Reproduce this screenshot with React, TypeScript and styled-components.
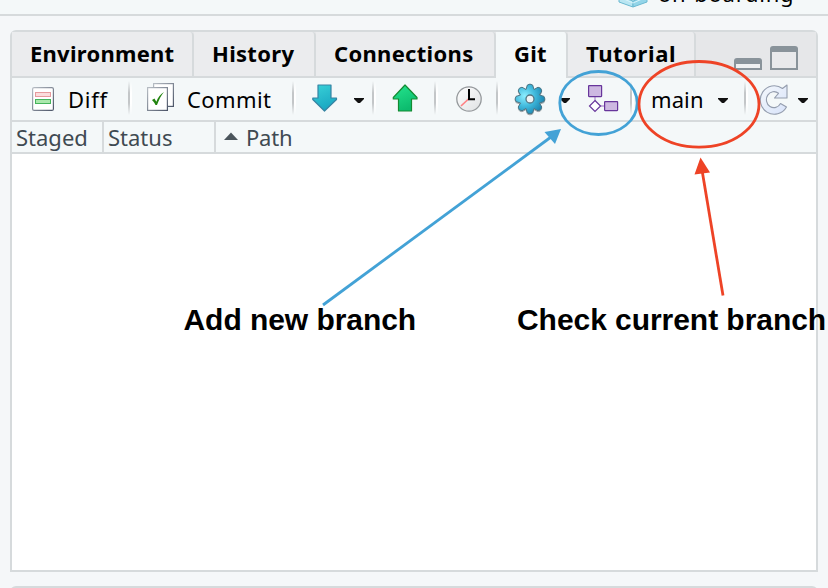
import React from 'react';
import styled, { createGlobalStyle } from 'styled-components';

const line = '#d6dadc';

const GlobalStyle = createGlobalStyle`
  *, *::before, *::after { box-sizing: border-box; }
  body {
    margin: 0;
    background: #f5f7f9;
    font-family: 'Noto Sans', 'Open Sans', sans-serif;
    font-size: 22px;
    color: #000;
    overflow: hidden;
  }
  svg { display: block; flex: none; overflow: visible; }
`;

const Screen = styled.div`
  position: relative;
  width: 828px;
  height: 588px;
  overflow: hidden;
  display: flex;
  flex-direction: column;
`;

const ProjectBar = styled.header`
  height: 16px;
  flex: none;
  display: flex;
  padding-left: 618px;
  background: #f4f8f9;
  border-bottom: 2px solid ${line};
`;

const ProjectName = styled.span`
  margin: -22px 0 0 10px;
  height: 34px;
  line-height: 30px;
  letter-spacing: 0.75px;
  white-space: nowrap;
`;

const Pane = styled.section`
  flex: none;
  display: flex;
  flex-direction: column;
  width: 808px;
  height: 542px;
  margin: 14px 0 0 10px;
  border: 2px solid ${line};
  border-radius: 6px 6px 0 0;
  background: #fff;
`;

const NextPane = styled.section`
  flex: none;
  width: 808px;
  height: 20px;
  margin: 14px 0 0 10px;
  border: 2px solid ${line};
  border-radius: 6px 6px 0 0;
`;

const Tabs = styled.nav`
  display: flex;
  height: 46px;
  flex: none;
  background: #e6e7e9;
  box-shadow: inset 0 -2px ${line};
`;

const Tab = styled.div<{ $width: number; $space: number; $active?: boolean }>`
  width: ${(p) => p.$width}px;
  height: 46px;
  padding-left: 18px;
  border-right: 2px solid ${line};
  border-bottom: ${(p) => (p.$active ? '0' : `2px solid ${line}`)};
  border-top-right-radius: 4px;
  background: ${(p) => (p.$active ? '#f4f8f9' : '#ebecee')};
  font-weight: 700;
  line-height: 43px;
  letter-spacing: ${(p) => p.$space}px;
  white-space: nowrap;
`;

const WindowButtons = styled.div`
  flex: 1;
  display: flex;
  align-items: flex-end;
  justify-content: flex-end;
  gap: 8px;
  padding: 0 18px 8px 0;
`;

const Toolbar = styled.div`
  display: flex;
  align-items: center;
  height: 44px;
  flex: none;
  background: #f4f8f9;
  border-bottom: 2px solid ${line};
`;

const ToolGroup = styled.div<{ $width: number; $pad: number; $gap?: number }>`
  display: flex;
  align-items: center;
  height: 42px;
  width: ${(p) => p.$width}px;
  padding-left: ${(p) => p.$pad}px;
  gap: ${(p) => p.$gap ?? 0}px;
  flex: none;
`;

const CaretSlot = styled.span<{ $after?: number }>`
  padding-top: 3px;
  margin-right: ${(p) => p.$after ?? 0}px;
`;

const Label = styled.span<{ $space: number }>`
  line-height: 42px;
  letter-spacing: ${(p) => p.$space}px;
  white-space: nowrap;
`;

const Separator = styled.i`
  width: 4px;
  height: 34px;
  margin-top: -2px;
  flex: none;
  background:
    linear-gradient(#f4f8f900, #c3c6c8 35%, #c3c6c8 65%, #f4f8f900) 0 0 / 2px 100% no-repeat,
    linear-gradient(#fff0, #fff 35%, #fff 65%, #fff0) 2px 0 / 2px 100% no-repeat;
`;

const Columns = styled.div`
  display: flex;
  height: 32px;
  flex: none;
  background: #f4f8f9;
  border-bottom: 2px solid ${line};
`;

const Column = styled.div<{ $width?: number; $space: number }>`
  display: flex;
  align-items: center;
  gap: 7px;
  ${(p) => (p.$width ? `width: ${p.$width}px; border-right: 2px solid ${line};` : 'flex: 1;')}
  padding-left: ${(p) => (p.$width ? 4 : 7)}px;
  color: #3f4a52;
  line-height: 31px;
  letter-spacing: ${(p) => p.$space}px;
`;

const Annotations = styled.svg`
  position: absolute;
  inset: 0;
`;

const Note = styled.div<{ $x: number; $y: number }>`
  position: absolute;
  left: ${(p) => p.$x}px;
  top: ${(p) => p.$y}px;
  font: 700 30px/36px 'Liberation Sans', Arial, sans-serif;
  letter-spacing: -0.05px;
  white-space: nowrap;
`;

const CubeIcon = () => (
  <svg width="30" height="8" viewBox="0 0 30 8">
    <path d="M1 -4L15 1V7L1 2Z" fill="#b9e6f2" stroke="#6bb9d1" />
    <path d="M29 -4L15 1V7L29 2Z" fill="#93d5e9" stroke="#6bb9d1" />
    <path d="M6 -1L15 3L24 -1" fill="none" stroke="#d8f3fa" />
  </svg>
);

const Caret = ({ after }: { after?: number }) => (
  <CaretSlot $after={after}>
    <svg width="10" height="5" viewBox="0 0 10 5">
      <path d="M0 0H10V1L6 5H4L0 1Z" fill="#111" />
    </svg>
  </CaretSlot>
);

const DiffIcon = () => (
  <svg width="22" height="24" viewBox="0 0 22 24">
    <defs>
      <linearGradient id="sheet" x2="1" y2="1">
        <stop stopColor="#b7bdc4" />
        <stop offset="1" stopColor="#4d5669" />
      </linearGradient>
    </defs>
    <rect x=".6" y=".6" width="20.8" height="22.8" rx="1.5" fill="#fff" stroke="url(#sheet)" strokeWidth="1.2" />
    <rect x="3.5" y="5.5" width="15" height="4" fill="#fbdcdc" stroke="#e69a9d" />
    <rect x="3.5" y="12.5" width="15" height="4" fill="#abe8ad" stroke="#46b45c" />
  </svg>
);

const CommitIcon = () => (
  <svg width="27" height="32" viewBox="0 0 27 32">
    <rect x="6.6" y=".6" width="19.8" height="22.8" fill="#fff" stroke="url(#sheet)" strokeWidth="1.2" />
    <rect x=".6" y="4.6" width="19.8" height="22.8" fill="#fff" stroke="url(#sheet)" strokeWidth="1.2" />
    <path d="M5 17L7.5 15.5L9.3 18.8C11 14.5 13 11.500 17 9C14 12.500 12 16.500 10 22H8.500C7.500 20 6.500 18.500 5 17Z" fill="#22840f" />
  </svg>
);

const PullIcon = () => (
  <svg width="26" height="30" viewBox="0 0 26 30">
    <defs>
      <linearGradient id="pull" x2=".4" y2="1">
        <stop stopColor="#39d2d8" />
        <stop offset="1" stopColor="#1aa7c2" />
      </linearGradient>
    </defs>
    <path d="M6 1H19V14H24.500V15.500L12.500 27L.8 15.500V14H6Z" fill="url(#pull)" stroke="#3684a3" strokeWidth="1.2" strokeLinejoin="round" />
  </svg>
);

const PushIcon = () => (
  <svg width="26" height="30" viewBox="0 0 26 30">
    <defs>
      <linearGradient id="push" x2=".4" y2="1">
        <stop stopColor="#25e58e" />
        <stop offset="1" stopColor="#0cbb6e" />
      </linearGradient>
    </defs>
    <path d="M6.500 27H19.500V15H25V13.500L13 1L1.300 13.500V15H6.500Z" fill="url(#push)" stroke="#148b32" strokeWidth="1.2" strokeLinejoin="round" />
  </svg>
);

const ClockIcon = () => (
  <svg width="26" height="26" viewBox="0 0 26 26">
    <defs>
      <linearGradient id="dial" x2="1" y2="1">
        <stop stopColor="#fff" />
        <stop offset="1" stopColor="#dfe1e3" />
      </linearGradient>
    </defs>
    <circle cx="13" cy="13" r="12.200" fill="url(#dial)" stroke="#969a9d" strokeWidth="1.300" />
    <path d="M12.500 13L5 20" stroke="#ff8184" strokeWidth="1.700" />
    <path d="M13 3V13.200H19" fill="none" stroke="#000" strokeWidth="2" />
  </svg>
);

const GearIcon = () => (
  <svg width="32" height="32" viewBox="-16 -16 32 32">
    <defs>
      <radialGradient id="gear" cx=".32" cy=".4" r=".7">
        <stop stopColor="#8ceeff" />
        <stop offset=".5" stopColor="#40b9dc" />
        <stop offset="1" stopColor="#1982ae" />
      </radialGradient>
      <filter id="gearShadow" x="-20%" y="-20%" width="140%" height="150%">
        <feDropShadow dx="0" dy="1" stdDeviation=".7" floodOpacity=".35" />
      </filter>
    </defs>
    <path
      d="M-4 -9.500L-2.600 -14Q0 -15.800 2.600 -14L4 -9.500L8 -11.800Q11.500 -11.500 11.800 -8L9.500 -4L14 -2.600Q15.800 0 14 2.600L9.500 4L11.800 8Q11.500 11.500 8 11.800L4 9.500L2.600 14Q0 15.800 -2.600 14L-4 9.500L-8 11.800Q-11.500 11.500 -11.800 8L-9.500 4L-14 2.600Q-15.800 0 -14 -2.600L-9.500 -4L-11.800 -8Q-11.500 -11.500 -8 -11.800Z"
      fill="url(#gear)" stroke="#4a7585" strokeWidth="1" filter="url(#gearShadow)"
    />
    <circle r="4" fill="#eef3f5" stroke="#527482" strokeWidth="1.300" />
  </svg>
);

const BranchIcon = () => (
  <svg width="30" height="28" viewBox="0 0 30 28">
    <path d="M7 12V17M12 21H17" stroke="#c7b0dc" strokeWidth="1.800" />
    <rect x=".6" y=".6" width="13" height="11" rx=".5" fill="#cdb8e1" stroke="#67359b" strokeWidth="1.200" />
    <rect x="16.600" y="16.600" width="13" height="9" rx=".5" fill="#cdb8e1" stroke="#67359b" strokeWidth="1.200" />
    <path d="M7 15.500L12.500 21L7 26.500L1.500 21Z" fill="#fff" stroke="#67359b" strokeWidth="1.200" />
  </svg>
);

const RefreshIcon = () => (
  <svg width="28" height="30" viewBox="0 0 28 30">
    <defs>
      <linearGradient id="refresh" x2="1" y2="1">
        <stop stopColor="#f4f8fc" />
        <stop offset="1" stopColor="#d8e3fa" />
      </linearGradient>
    </defs>
    <path
      d="M22.500 4.500L27 1V14H14.500L18.500 9.300A7.500 8 0 1 0 20.500 19.500L26.500 23A14 14.200 0 1 1 22.500 4.500Z"
      fill="url(#refresh)" stroke="#949dae" strokeWidth="1.100" strokeLinejoin="round"
    />
  </svg>
);

const SortIcon = () => (
  <svg width="16" height="11" viewBox="0 0 16 11">
    <path d="M1 8L8 .5L15 8Z" fill="#4b555c" />
  </svg>
);

const MinimizeIcon = () => (
  <svg width="28" height="12" viewBox="0 0 28 12">
    <path d="M0 12V3Q0 0 3 0H25Q28 0 28 3V12Z" fill="#89939a" />
    <path d="M2 6H26V10H2Z" fill="#f0f1f2" />
  </svg>
);

const MaximizeIcon = () => (
  <svg width="28" height="24" viewBox="0 0 28 24">
    <path d="M0 24V3Q0 0 3 0H25Q28 0 28 3V24Z" fill="#89939a" />
    <path d="M2 6H26V22H2Z" fill="#e8e9eb" />
  </svg>
);

export default function App() {
  return (
    <Screen>
      <GlobalStyle />
      <ProjectBar>
        <CubeIcon />
        <ProjectName>on-boarding</ProjectName>
      </ProjectBar>

      <Pane>
        <Tabs>
          <Tab $width={182} $space={0.25}>Environment</Tab>
          <Tab $width={122} $space={0.3}>History</Tab>
          <Tab $width={180} $space={0.3}>Connections</Tab>
          <Tab $width={72} $space={0.3} $active>Git</Tab>
          <Tab $width={128} $space={0.6}>Tutorial</Tab>
          <WindowButtons>
            <MinimizeIcon />
            <MaximizeIcon />
          </WindowButtons>
        </Tabs>

        <Toolbar>
          <ToolGroup $width={116} $pad={20} $gap={14}>
            <DiffIcon />
            <Label $space={0.7}>Diff</Label>
          </ToolGroup>
          <Separator />
          <ToolGroup $width={160} $pad={15} $gap={13}>
            <CommitIcon />
            <Label $space={0.4}>Commit</Label>
          </ToolGroup>
          <Separator />
          <ToolGroup $width={76} $pad={16} $gap={16}>
            <PullIcon />
            <Caret />
          </ToolGroup>
          <Separator />
          <ToolGroup $width={58} $pad={16}>
            <PushIcon />
          </ToolGroup>
          <Separator />
          <ToolGroup $width={58} $pad={18}>
            <ClockIcon />
          </ToolGroup>
          <Separator />
          <ToolGroup $width={130} $pad={14} $gap={14}>
            <GearIcon />
            <Caret after={4} />
            <BranchIcon />
          </ToolGroup>
          <Separator />
          <ToolGroup $width={110} $pad={17} $gap={14}>
            <Label $space={0.1}>main</Label>
            <Caret />
          </ToolGroup>
          <Separator />
          <ToolGroup $width={68} $pad={12} $gap={10}>
            <RefreshIcon />
            <Caret />
          </ToolGroup>
        </Toolbar>

        <Columns>
          <Column $width={92} $space={0}>Staged</Column>
          <Column $width={112} $space={0}>Status</Column>
          <Column $space={-0.2}>
            <SortIcon />
            Path
          </Column>
        </Columns>
      </Pane>

      <NextPane />

      <Annotations width="828" height="588" viewBox="0 0 828 588">
        <g fill="none" stroke="#43a2d6" strokeWidth="2.800">
          <ellipse cx="598.500" cy="103" rx="38.700" ry="31.500" />
          <path d="M323 305L551 137" />
        </g>
        <path d="M561 129L544.500 132L555 144Z" fill="#43a2d6" />
        <g fill="none" stroke="#ee4326" strokeWidth="2.800">
          <ellipse cx="699" cy="104.300" rx="60" ry="42.800" />
          <path d="M723 295.500L702 170" />
        </g>
        <path d="M700.500 157.500L694.500 174.500L710 172.500Z" fill="#ee4326" />
      </Annotations>
      <Note $x={183.5} $y={302}>Add new branch</Note>
      <Note $x={517} $y={302}>Check current branch</Note>
    </Screen>
  );
}
